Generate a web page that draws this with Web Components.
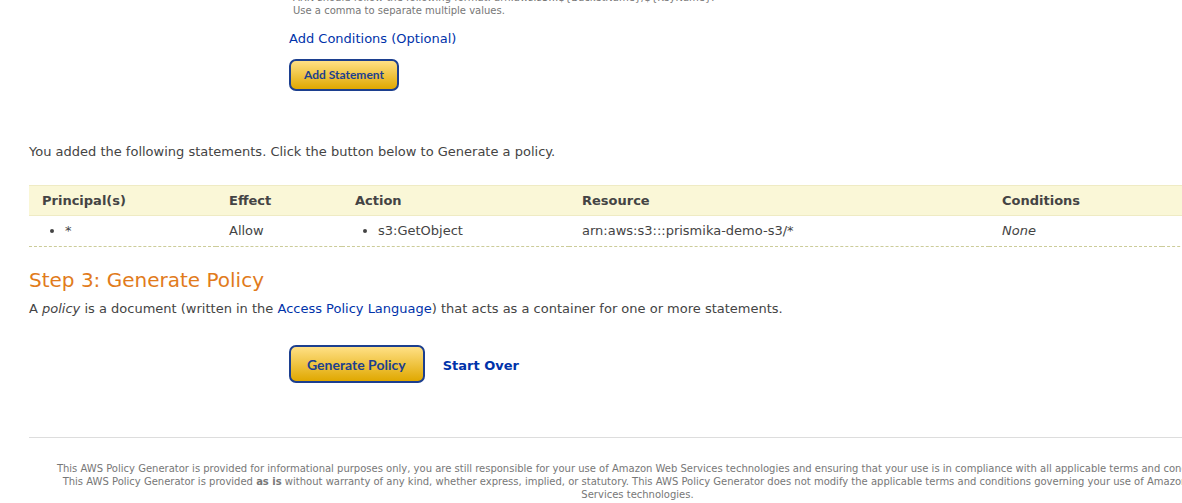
<!DOCTYPE html>
<html lang="en">
<head>
<meta charset="utf-8">
<title>AWS Policy Generator</title>
<style>
html, body { margin: 0; background: #fff; }
body { overflow: hidden; font: 13px/20px "DejaVu Sans", sans-serif; color: #444; }
</style>
</head>
<body>
<policy-page>
  <statement-form></statement-form>
  <statement-list></statement-list>
  <generate-step></generate-step>
  <page-footer></page-footer>
</policy-page>
<script>
const define = (name, html) => {
  const template = document.createElement('template');
  template.innerHTML = html;
  customElements.define(name, class extends HTMLElement {
    constructor() {
      super();
      this.attachShadow({ mode: 'open' }).append(template.content.cloneNode(true));
    }
  });
};

define('gold-button', `
<style>
:host { display: inline-block; }
button { display: block; height: 32px; padding: 0 13px; border: 2px solid #1c3f8f; border-radius: 7px;
  background: linear-gradient(#ffe085, #e0a800); color: #1c3f8f;
  font: bold 12px/28px Lato, sans-serif; white-space: nowrap; cursor: pointer; }
:host([size="large"]) button { height: 38px; padding: 2px 17px 0 16px; font-size: 14px; line-height: 32px; }
</style>
<button type="button"><slot></slot></button>`);

define('statement-form', `
<style>
:host { display: block; padding-left: 260px; }
.hint { margin: 0 0 12px; padding-left: 4px; font-size: 10px; line-height: 13px; color: #777; }
a { display: block; width: fit-content; color: #0033aa; text-decoration: none; margin-bottom: 10px; }
gold-button { display: block; width: fit-content; }
</style>
<p class="hint">ARN should follow the following format: arn:aws:s3:::\${BucketName}/\${KeyName}.<br>Use a comma to separate multiple values.</p>
<a href="#">Add Conditions (Optional)</a>
<gold-button>Add Statement</gold-button>`);

define('statement-list', `
<style>
:host { display: block; padding-top: 51px; }
p { margin: 0 0 23px; }
table { width: 100%; border-collapse: separate; border-spacing: 0; table-layout: fixed; }
th, td { padding: 5px 13px 4px; text-align: left; font-weight: normal; }
th { background: #faf7d7; border: solid #efebc4; border-width: 1px 0; font-weight: bold; }
td { padding-bottom: 5px; border-bottom: 1px dashed #cccc99; }
ul { margin: 0; padding-left: 23px; }
.principal { width: 161px; } .effect { width: 100px; } .action { width: 201px; }
.resource { width: 394px; } .conditions { width: 147px; }
</style>
<p>You added the following statements. Click the button below to Generate a policy.</p>
<table>
<thead><tr><th class="principal">Principal(s)</th><th class="effect">Effect</th><th class="action">Action</th><th class="resource">Resource</th><th class="conditions">Conditions</th><th></th></tr></thead>
<tbody><tr><td><ul><li>*</li></ul></td><td>Allow</td><td><ul><li>s3:GetObject</li></ul></td><td>arn:aws:s3:::prismika-demo-s3/*</td><td><em>None</em></td><td></td></tr></tbody>
</table>`);

define('generate-step', `
<style>
:host { display: block; padding-top: 20px; }
h2 { margin: 0 0 6px; font-size: 20px; line-height: 26px; font-weight: normal; color: #e17b1b; }
p { margin: 0 0 26px; }
a { color: #0033aa; text-decoration: none; }
.actions { display: flex; align-items: baseline; gap: 18px; padding-left: 260px; font-weight: bold; }
</style>
<h2>Step 3: Generate Policy</h2>
<p>A <em>policy</em> is a document (written in the <a href="#">Access Policy Language</a>) that acts as a container for one or more statements.</p>
<div class="actions"><gold-button size="large">Generate Policy</gold-button><a href="#">Start Over</a></div>`);

define('page-footer', `
<style>
:host { display: block; margin-top: 54px; padding-top: 24px; border-top: 1px solid #ddd;
  text-align: center; font-size: 10px; line-height: 13px; color: #777; }
p { margin: 0; }
</style>
<p>This AWS Policy Generator is provided for informational purposes only, you are still responsible for your use of Amazon Web Services technologies and ensuring that your use is in compliance with all applicable terms and conditions.<br>This AWS Policy Generator is provided <b>as is</b> without warranty of any kind, whether express, implied, or statutory. This AWS Policy Generator does not modify the applicable terms and conditions governing your use of Amazon Web<br>Services technologies.</p>`);

define('policy-page', `
<style>
:host { display: block; overflow: hidden; }
main { margin: -9px -64px 0 29px; }
</style>
<main><slot></slot></main>`);
</script>
</body>
</html>
